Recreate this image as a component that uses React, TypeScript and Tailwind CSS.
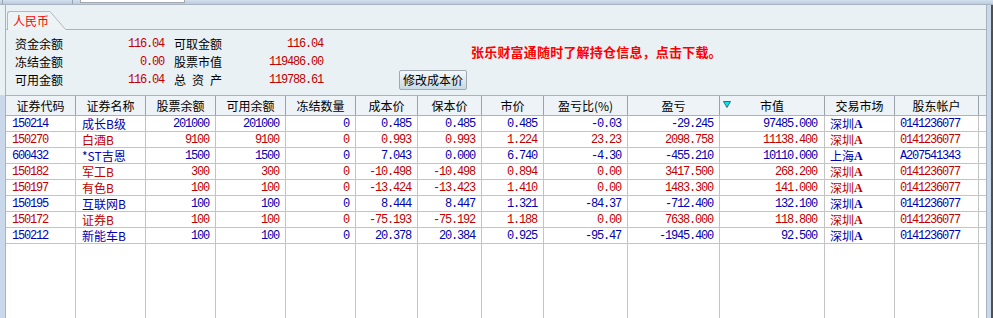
import React from 'react';

type Row = {
  code: string;
  name: string;
  qty: string;
  avail: string;
  frozen: string;
  cost: string;
  be: string;
  price: string;
  pct: string;
  pl: string;
  mv: string;
  mkt: string;
  acct: string;
  red: boolean;
};

const rows: Row[] = [
  { code: '150214', name: '成长B级', qty: '201000', avail: '201000', frozen: '0', cost: '0.485', be: '0.485', price: '0.485', pct: '-0.03', pl: '-29.245', mv: '97485.000', mkt: '深圳', acct: '0141236077', red: false },
  { code: '150270', name: '白酒B', qty: '9100', avail: '9100', frozen: '0', cost: '0.993', be: '0.993', price: '1.224', pct: '23.23', pl: '2098.758', mv: '11138.400', mkt: '深圳', acct: '0141236077', red: true },
  { code: '600432', name: '*ST吉恩', qty: '1500', avail: '1500', frozen: '0', cost: '7.043', be: '0.000', price: '6.740', pct: '-4.30', pl: '-455.210', mv: '10110.000', mkt: '上海', acct: 'A207541343', red: false },
  { code: '150182', name: '军工B', qty: '300', avail: '300', frozen: '0', cost: '-10.498', be: '-10.498', price: '0.894', pct: '0.00', pl: '3417.500', mv: '268.200', mkt: '深圳', acct: '0141236077', red: true },
  { code: '150197', name: '有色B', qty: '100', avail: '100', frozen: '0', cost: '-13.424', be: '-13.423', price: '1.410', pct: '0.00', pl: '1483.300', mv: '141.000', mkt: '深圳', acct: '0141236077', red: true },
  { code: '150195', name: '互联网B', qty: '100', avail: '100', frozen: '0', cost: '8.444', be: '8.447', price: '1.321', pct: '-84.37', pl: '-712.400', mv: '132.100', mkt: '深圳', acct: '0141236077', red: false },
  { code: '150172', name: '证券B', qty: '100', avail: '100', frozen: '0', cost: '-75.193', be: '-75.192', price: '1.188', pct: '0.00', pl: '7638.000', mv: '118.800', mkt: '深圳', acct: '0141236077', red: true },
  { code: '150212', name: '新能车B', qty: '100', avail: '100', frozen: '0', cost: '20.378', be: '20.384', price: '0.925', pct: '-95.47', pl: '-1945.400', mv: '92.500', mkt: '深圳', acct: '0141236077', red: false },
];

// column widths include the right border line
const cols = [
  { title: '证券代码', w: 'w-[70px]' },
  { title: '证券名称', w: 'w-[70px]' },
  { title: '股票余额', w: 'w-[70px]' },
  { title: '可用余额', w: 'w-[70px]' },
  { title: '冻结数量', w: 'w-[70px]' },
  { title: '成本价', w: 'w-[62px]' },
  { title: '保本价', w: 'w-[64px]' },
  { title: '市价', w: 'w-[62px]' },
  { title: '盈亏比(%)', w: 'w-[84px]' },
  { title: '盈亏', w: 'w-[92px]' },
  { title: '市值', w: 'w-[105px]' },
  { title: '交易市场', w: 'w-[70px]' },
  { title: '股东帐户', w: 'w-[84px]' },
];

const cjk = "font-['Noto_Sans_CJK_SC',sans-serif] text-[12px]";
const mono = "font-['Liberation_Mono','Noto_Sans_CJK_SC',monospace] text-[12px] tracking-[-1.2px]";

function InfoRow({ label, value, label2, value2 }: { label: React.ReactNode; value: string; label2: React.ReactNode; value2: string }) {
  return (
    <div className="flex h-[18px] items-center">
      <div className={`w-[48px] ${cjk} text-black leading-none`}>{label}</div>
      <div className={`w-[101px] text-right ${mono} text-[#c00000]`}>{value}</div>
      <div className={`ml-[10px] w-[48px] ${cjk} text-black leading-none`}>{label2}</div>
      <div className={`w-[101px] text-right ${mono} text-[#c00000]`}>{value2}</div>
    </div>
  );
}

function SortMark() {
  return (
    <svg width="8" height="7" viewBox="0 0 8 7" className="absolute left-[3px] top-[5px]">
      <polygon points="0.5,0.5 7.5,0.5 4,6.5" fill="#00e8f0" stroke="#205060" strokeWidth="0.8" />
    </svg>
  );
}

export default function App() {
  return (
    <div className="w-[993px] h-[318px] overflow-hidden bg-[#eaf1f4] flex flex-col">
      {/* top strip */}
      <div className="h-[5px] flex bg-gradient-to-b from-[#d3e0ee] to-[#b8cce2] border-b border-[#a9b3be]">
        <div className="w-[2px]" />
        <div className="w-px bg-[#98a4b0]" />
        <div className="w-[69px]" />
        <div className="w-px bg-[#98a4b0]" />
        <div className="w-[7px]" />
        <div className="w-[105px] h-[3px] bg-white border border-t-0 border-[#a0a8b0]" />
      </div>

      <div className="flex flex-1 min-h-0">
        {/* left edge */}
        <div className="w-[5px] flex flex-col">
          <div className="h-[90px] bg-[#eaf1f4]" />
          <div className="flex-1 bg-[#c9d8ea]" />
        </div>

        {/* panel */}
        <div className="w-[982px] border-l border-r border-[#a9b3be] flex flex-col">
          {/* tab row */}
          <div className="h-[25px] flex items-end border-b border-[#a9b3be] pl-[1px]">
            <div className="flex items-end h-[19px] -mb-px">
              <div className="h-[19px] w-[43px] border-l border-t border-[#b0b8c0] rounded-tl-[3px] bg-[#eef4f6] flex items-center pl-[5px]">
                <span className={`${cjk} text-[#ff0000] leading-none`}>人民币</span>
              </div>
              <svg width="16" height="19" viewBox="0 0 16 19" className="block">
                <polygon points="0,0 0,19 16,19" fill="#eef4f6" />
                <line x1="0" y1="0.5" x2="15.5" y2="18.5" stroke="#b0b8c0" strokeWidth="1" />
              </svg>
            </div>
          </div>

          {/* info area */}
          <div className="h-[65px] flex items-start">
            <div className="pl-[9px] pt-[5px]">
              <InfoRow label="资金余额" value="116.04" label2="可取金额" value2="116.04" />
              <InfoRow label="冻结金额" value="0.00" label2="股票市值" value2="119486.00" />
              <InfoRow
                label="可用金额"
                value="116.04"
                label2={
                  <span className="flex justify-between w-[48px]">
                    <span>总</span>
                    <span>资</span>
                    <span>产</span>
                  </span>
                }
                value2="119788.61"
              />
            </div>
            <button className={`ml-[76px] mt-[40px] w-[68px] h-[20px] border border-[#a0a8b0] rounded-[2px] bg-gradient-to-b from-[#f4f8fa] to-[#c8dae4] ${cjk} text-black leading-none`}>
              修改成本价
            </button>
            <div className="ml-[4px] mt-[14px] font-['Noto_Sans_CJK_SC',sans-serif] text-[13px] font-bold text-[#ff0000] leading-[16px] tracking-[0.2px]">
              张乐财富通随时了解持仓信息，点击下载。
            </div>
          </div>

          {/* header */}
          <div className="h-[21px] flex border-t border-b border-[#a9b3be] bg-[#edf3f6]">
            {cols.map((c) => (
              <div
                key={c.title}
                className={`${c.w} relative border-r border-[#9aa2aa] flex items-center justify-center ${cjk} text-black leading-none`}
              >
                {c.title === '市值' && <SortMark />}
                {c.title}
              </div>
            ))}
            <div className="flex-1" />
          </div>

          {/* body */}
          <div className="flex-1 flex flex-col bg-white min-h-0">
            {rows.map((r) => {
              const color = r.red ? 'text-[#c00000]' : 'text-[#0000b0]';
              const num = `border-r border-[#c4c4c4] flex items-center justify-end pr-[6px] ${mono} ${color}`;
              return (
                <div key={r.code} className="h-[16px] flex border-b border-[#c4c4c4]">
                  <div className={`w-[70px] border-r border-[#c4c4c4] flex items-center pl-[6px] ${mono} ${color}`}>{r.code}</div>
                  <div className={`w-[70px] border-r border-[#c4c4c4] flex items-center pl-[6px] ${cjk} leading-none ${color}`}>{r.name}</div>
                  <div className={`w-[70px] ${num}`}>{r.qty}</div>
                  <div className={`w-[70px] ${num}`}>{r.avail}</div>
                  <div className={`w-[70px] ${num}`}>{r.frozen}</div>
                  <div className={`w-[62px] ${num}`}>{r.cost}</div>
                  <div className={`w-[64px] ${num}`}>{r.be}</div>
                  <div className={`w-[62px] ${num}`}>{r.price}</div>
                  <div className={`w-[84px] ${num}`}>{r.pct}</div>
                  <div className={`w-[92px] ${num}`}>{r.pl}</div>
                  <div className={`w-[105px] ${num} pr-[7px]`}>{r.mv}</div>
                  <div className={`w-[70px] border-r border-[#c4c4c4] flex items-center pl-[5px] ${color}`}>
                    <span className={`${cjk} leading-none`}>{r.mkt}</span>
                    <span className="font-['Liberation_Serif',serif] text-[12px] font-bold leading-none">A</span>
                  </div>
                  <div className={`w-[84px] border-r border-[#c4c4c4] flex items-center pl-[5px] ${mono} ${color}`}>{r.acct}</div>
                  <div className="flex-1" />
                </div>
              );
            })}
            {/* empty grid below rows */}
            <div className="flex-1 flex">
              {cols.map((c) => (
                <div key={c.title} className={`${c.w} border-r border-[#c4c4c4]`} />
              ))}
              <div className="flex-1" />
            </div>
          </div>
        </div>

        {/* right edge */}
        <div className="w-[4px] bg-[#c9d8ea]" />
        <div className="w-[2px] bg-[#505050]" />
      </div>
    </div>
  );
}
